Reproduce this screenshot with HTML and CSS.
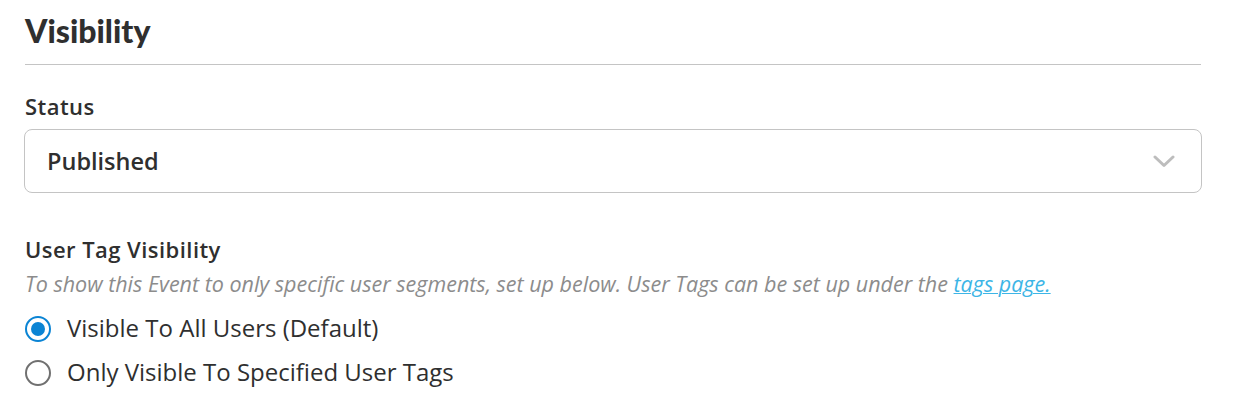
FILE: index.html
```html
<!DOCTYPE html>
<html lang="en">
<head>
<meta charset="utf-8">
<title>Visibility</title>
<link rel="stylesheet" href="styles.css">
</head>
<body>
<div class="page">
  <h1 class="title">Visibility</h1>
  <div class="divider"></div>

  <label class="field-label status-label">Status</label>
  <div class="select">
    <span class="select-value">Published</span>
    <svg class="chevron" width="22" height="13" viewBox="0 0 22 13" aria-hidden="true">
      <polyline points="2,2 11,10.5 20,2" fill="none" stroke="#bdbdbd" stroke-width="3" stroke-linecap="round" stroke-linejoin="round"/>
    </svg>
  </div>

  <label class="field-label tag-label">User Tag Visibility</label>
  <p class="help">To show this Event to only specific user segments, set up below. User Tags can be set up under the <a class="link" href="#">tags page.</a></p>

  <div class="radios">
    <div class="radio-row">
      <span class="radio radio-checked"><span class="radio-dot"></span></span>
      <span class="radio-label">Visible To All Users (Default)</span>
    </div>
    <div class="radio-row">
      <span class="radio"></span>
      <span class="radio-label">Only Visible To Specified User Tags</span>
    </div>
  </div>
</div>
</body>
</html>
```

FILE: styles.css
```css
html, body {
  margin: 0;
  padding: 0;
  background: #ffffff;
}

body {
  font-family: "Open Sans", Lato, "Liberation Sans", sans-serif;
  color: #2f2f2f;
}

.page {
  width: 1178px;
  padding: 11px 0 0 24px;
}

.title {
  margin: 0 0 0 1px;
  font-family: Lato, "Open Sans", sans-serif;
  font-size: 32px;
  line-height: 40px;
  font-weight: 900;
  color: #2f2f2f;
}

.divider {
  margin: 13px 1px 0 1px;
  height: 1px;
  background: #c4c4c4;
}

.field-label {
  display: block;
  margin-left: 1px;
  font-size: 22px;
  line-height: 26px;
  font-weight: 600;
  letter-spacing: 0.45px;
  color: #2f2f2f;
}

.status-label {
  margin-top: 28px;
}

.select {
  margin-top: 10px;
  height: 62px;
  border: 1px solid #c4c4c4;
  border-radius: 8px;
  display: flex;
  align-items: center;
  justify-content: space-between;
  padding: 0 26px 0 22px;
}

.select-value {
  font-size: 23.5px;
  font-weight: 600;
  color: #2f2f2f;
}

.chevron {
  display: block;
  margin-top: 1px;
}

.tag-label {
  margin-top: 43px;
}

.help {
  margin: 9px 0 0 1px;
  font-size: 21.5px;
  line-height: 26px;
  font-style: italic;
  color: #8c8c8c;
}

.link {
  color: #3db5e6;
  text-decoration: underline;
  text-decoration-thickness: 1px;
}

.radios {
  margin-top: 10px;
  display: flex;
  flex-direction: column;
}

.radio-row {
  height: 44px;
  display: flex;
  align-items: center;
  gap: 16px;
  margin-left: 1px;
}

.radio {
  box-sizing: border-box;
  width: 26px;
  height: 26px;
  border-radius: 50%;
  border: 2px solid #707070;
  display: flex;
  align-items: center;
  justify-content: center;
  flex: none;
}

.radio-checked {
  border-color: #0b84d4;
}

.radio-dot {
  width: 14px;
  height: 14px;
  border-radius: 50%;
  background: #0b84d4;
}

.radio-label {
  font-size: 24px;
  line-height: 30px;
  margin-top: -2px;
  color: #2f2f2f;
}
```
